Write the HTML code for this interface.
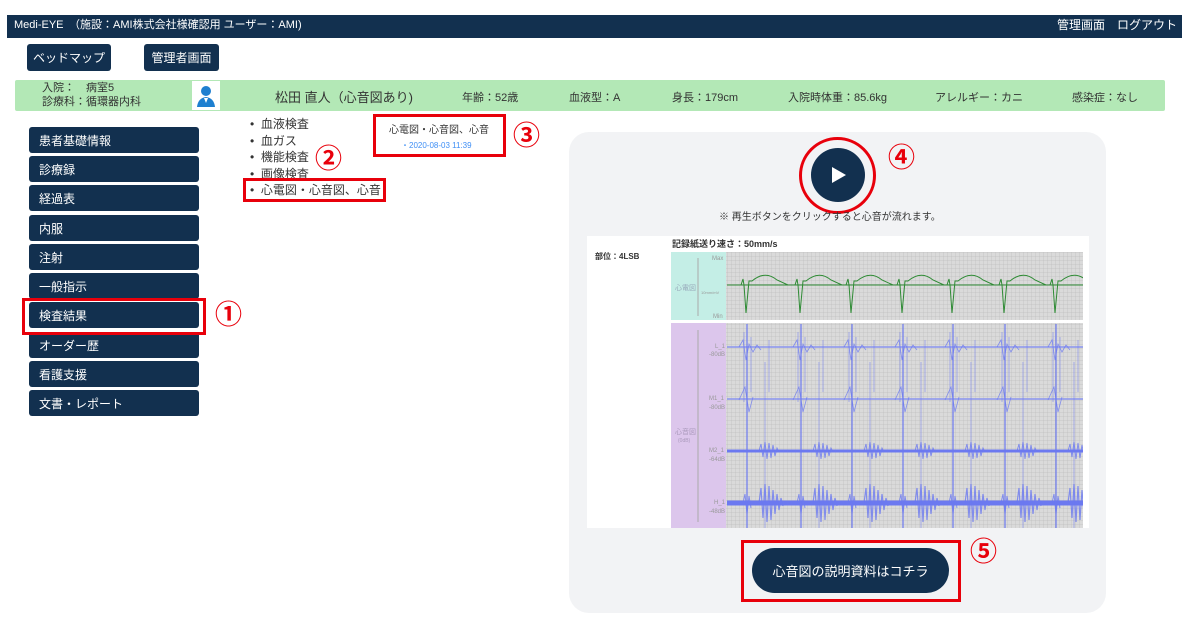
<!DOCTYPE html>
<html><head><meta charset="utf-8"><style>
*{box-sizing:border-box;margin:0;padding:0}
body{width:1189px;height:628px;background:#fff;position:relative;overflow:hidden;font-family:"Liberation Sans","Noto Sans CJK JP",sans-serif;color:#333}
.a{position:absolute}
.nav{background:#12304f;color:#fff}
.btn{background:#12304f;color:#fff;border-radius:3px;font-size:12px;display:flex;align-items:center}
.red{border:3px solid #e8000b}
.num{color:#e8000b;font-size:27px;font-weight:bold;line-height:1}
.g{font-size:11px;color:#333}
</style></head><body>
<div class="a nav" style="left:7px;top:15px;width:1175px;height:23px;font-size:11px;line-height:21px;padding-left:7px">Medi-EYE　（施設：AMI株式会社様確認用 ユーザー：AMI)</div>
<div class="a" style="right:12px;top:15px;color:#fff;font-size:12px;line-height:21px">管理画面　ログアウト</div>
<div class="a btn" style="left:27px;top:44px;width:84px;height:27px;justify-content:center">ベッドマップ</div>
<div class="a btn" style="left:144px;top:44px;width:75px;height:27px;justify-content:center">管理者画面</div>
<div class="a" style="left:15px;top:80px;width:1150px;height:31px;background:#b3e8b6;border-radius:2px"></div>
<div class="a g" style="left:42px;top:81px;line-height:14px">入院：　病室5<br>診療科：循環器内科</div>
<div class="a" style="left:192px;top:81px;width:28px;height:29px;background:#fff">
<svg width="28" height="29"><circle cx="14" cy="10" r="5" fill="#1e7fd0"/><path d="M5 26 Q6 17 14 16 Q22 17 23 26Z" fill="#1e7fd0"/><path d="M12 17 L14 22 L16 17" fill="#fff"/></svg></div>
<div class="a" style="left:275px;top:87px;font-size:13px">松田 直人（心音図あり)</div>
<div class="a g" style="left:462px;top:89px">年齢：52歳</div>
<div class="a g" style="left:569px;top:89px">血液型：A</div>
<div class="a g" style="left:672px;top:89px">身長：179cm</div>
<div class="a g" style="left:788px;top:89px">入院時体重：85.6kg</div>
<div class="a g" style="left:935px;top:89px">アレルギー：カニ</div>
<div class="a g" style="left:1072px;top:89px">感染症：なし</div>

<div class="a btn" style="left:29px;top:127px;width:170px;height:26px;padding-left:10px">患者基礎情報</div>
<div class="a btn" style="left:29px;top:156px;width:170px;height:26px;padding-left:10px">診療録</div>
<div class="a btn" style="left:29px;top:185px;width:170px;height:26px;padding-left:10px">経過表</div>
<div class="a btn" style="left:29px;top:215px;width:170px;height:26px;padding-left:10px">内服</div>
<div class="a btn" style="left:29px;top:244px;width:170px;height:26px;padding-left:10px">注射</div>
<div class="a btn" style="left:29px;top:273px;width:170px;height:26px;padding-left:10px">一般指示</div>
<div class="a btn" style="left:29px;top:302px;width:170px;height:26px;padding-left:10px">検査結果</div>
<div class="a btn" style="left:29px;top:332px;width:170px;height:26px;padding-left:10px">オーダー歴</div>
<div class="a btn" style="left:29px;top:361px;width:170px;height:26px;padding-left:10px">看護支援</div>
<div class="a btn" style="left:29px;top:390px;width:170px;height:26px;padding-left:10px">文書・レポート</div>
<div class="a red" style="left:22px;top:298px;width:184px;height:37px"></div>
<div class="a num" style="left:215px;top:302px">①</div>

<div class="a" style="left:250px;top:116px;font-size:12px;line-height:16.5px;color:#333">
<div>•&nbsp;&nbsp;血液検査</div><div>•&nbsp;&nbsp;血ガス</div><div>•&nbsp;&nbsp;機能検査</div><div>•&nbsp;&nbsp;画像検査</div><div>•&nbsp;&nbsp;心電図・心音図、心音</div></div>
<div class="a red" style="left:243px;top:178px;width:143px;height:24px"></div>
<div class="a num" style="left:315px;top:146px">②</div>
<div class="a red" style="left:373px;top:114px;width:133px;height:43px"></div>
<div class="a" style="left:389px;top:121px;font-size:10px">心電図・心音図、心音</div>
<div class="a" style="left:401px;top:140px;font-size:8px;color:#3f8ff5">・2020-08-03 11:39</div>
<div class="a num" style="left:513px;top:123px">③</div>

<div class="a" style="left:569px;top:132px;width:537px;height:481px;background:#f2f3f5;border-radius:20px"></div>
<div class="a" style="left:811px;top:148px;width:54px;height:54px;border-radius:50%;background:#12304f"></div>
<svg class="a" style="left:831px;top:166px" width="16" height="18"><path d="M1 1 L15 9 L1 17Z" fill="#fff"/></svg>
<div class="a" style="left:799px;top:137px;width:77px;height:77px;border-radius:50%;border:3px solid #e8000b"></div>
<div class="a num" style="left:888px;top:145px">④</div>
<div class="a" style="left:719px;top:208px;font-size:10px;color:#333">※ 再生ボタンをクリックすると心音が流れます。</div>

<div class="a" style="left:587px;top:236px;width:502px;height:292px;background:#fff"></div>
<div class="a" style="left:672px;top:237px;font-size:9px;font-weight:bold">記録紙送り速さ：50mm/s</div>
<div class="a" style="left:595px;top:251px;font-size:8px;font-weight:bold">部位：4LSB</div>
<svg class="a" style="left:671px;top:252px" width="412" height="276">
<defs>
<pattern id="gr" width="4" height="4" patternUnits="userSpaceOnUse"><rect width="4" height="4" fill="#dadada"/><path d="M0 0H4M0 0V4" stroke="#b4b4b4" stroke-width="0.5"/></pattern>
<g id="eb"><path d="M-6 33 L-2 33 L0 27 L1 33 L3 61 L6 29 L9 29 Q22 18 34 28 L45 33" fill="none" stroke="#2e8b34" stroke-width="1"/></g>
<g id="hb" stroke="#6c79f0" fill="#6c79f0">
<path d="M4 72 V276" stroke-width="1.2"/><path d="M1 80 V150 M8 85 V140 M22 110 V276 M26 88 V140" stroke-width="0.8" opacity=".6"/>
<path d="M-4 95 L0 88 L3 108 L6 92 L10 100 L14 93 L18 98 M-4 148 L2 135 L6 160 L10 145" stroke-width="0.8" fill="none" opacity=".8"/>
<path d="M16 199 L18 192 L20 205 L22 190 L24 207 L26 191 L28 206 L30 193 L32 204 L34 196 L36 200" stroke-width="1" fill="none" opacity=".8"/>
<path d="M16 251 L18 236 L20 266 L22 232 L24 270 L26 234 L28 268 L30 238 L32 262 L34 242 L36 258 L38 246 L40 254" stroke-width="1.2" fill="none" opacity=".8"/>
<path d="M0 251 L2 242 L4 262 L6 244 L8 256" stroke-width="1" fill="none" opacity=".8"/>
</g>
</defs>
<rect x="0" y="0" width="55" height="68" fill="#c4eee6"/>
<rect x="0" y="71" width="55" height="205" fill="#dcc6ec"/>
<rect x="55" y="0" width="357" height="68" fill="url(#gr)"/>
<rect x="55" y="71" width="357" height="205" fill="url(#gr)"/>
<path d="M27 6V64M27 78V270" stroke="#aaa" stroke-width="1"/>
<text x="4" y="38" font-size="7" fill="#9ab">心電図</text><text x="41" y="8" font-size="6" fill="#999">Max</text><text x="42" y="66" font-size="6" fill="#999">Min</text>
<text x="30" y="42" font-size="4" fill="#999">10mm/mV</text>
<text x="4" y="182" font-size="7" fill="#a9b">心音図</text><text x="7" y="190" font-size="5" fill="#a9b">(0dB)</text>
<text x="44" y="96" font-size="6" fill="#999">L_1</text><text x="38" y="104" font-size="6" fill="#999">-80dB</text>
<text x="38" y="148" font-size="6" fill="#999">M1_1</text><text x="38" y="157" font-size="6" fill="#999">-80dB</text>
<text x="38" y="200" font-size="6" fill="#999">M2_1</text><text x="38" y="209" font-size="6" fill="#999">-64dB</text>
<text x="43" y="252" font-size="6" fill="#999">H_1</text><text x="38" y="261" font-size="6" fill="#999">-48dB</text>
<path d="M56 33H412" stroke="#2e8b34" stroke-width="1"/>
<path d="M56 95H412M56 147H412" stroke="#8a94f0" stroke-width="1.5"/>
<path d="M56 199H412" stroke="#6c79f0" stroke-width="3"/><path d="M56 251H412" stroke="#6c79f0" stroke-width="5"/>
<use href="#eb" x="72"/><use href="#eb" x="126"/><use href="#eb" x="177"/><use href="#eb" x="228"/><use href="#eb" x="278"/><use href="#eb" x="330"/><use href="#eb" x="381"/>
<use href="#hb" x="72"/><use href="#hb" x="126"/><use href="#hb" x="177"/><use href="#hb" x="228"/><use href="#hb" x="278"/><use href="#hb" x="330"/><use href="#hb" x="381"/>
</svg>

<div class="a" style="left:752px;top:548px;width:197px;height:45px;border-radius:23px;background:#12304f;color:#fff;font-size:13px;display:flex;align-items:center;justify-content:center">心音図の説明資料はコチラ</div>
<div class="a red" style="left:741px;top:540px;width:220px;height:62px"></div>
<div class="a num" style="left:970px;top:539px">⑤</div>
</body></html>
